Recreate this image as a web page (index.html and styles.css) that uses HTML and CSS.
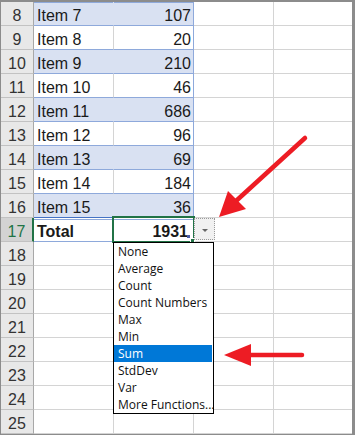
FILE: index.html
```html
<!DOCTYPE html>
<html lang="en">
<head>
    <meta charset="UTF-8">
    <title>Table Total Row - Sum</title>
    <link rel="stylesheet" href="styles.css">
</head>
<body>
    <div class="sheet">
        <div class="row band first"><div class="hd">8</div><div class="c a">Item 7</div><div class="c b">107</div><div class="c"></div><div class="c d"></div></div>
        <div class="row"><div class="hd">9</div><div class="c a">Item 8</div><div class="c b">20</div><div class="c"></div><div class="c d"></div></div>
        <div class="row band"><div class="hd">10</div><div class="c a">Item 9</div><div class="c b">210</div><div class="c"></div><div class="c d"></div></div>
        <div class="row"><div class="hd">11</div><div class="c a">Item 10</div><div class="c b">46</div><div class="c"></div><div class="c d"></div></div>
        <div class="row band"><div class="hd">12</div><div class="c a">Item 11</div><div class="c b">686</div><div class="c"></div><div class="c d"></div></div>
        <div class="row"><div class="hd">13</div><div class="c a">Item 12</div><div class="c b">96</div><div class="c"></div><div class="c d"></div></div>
        <div class="row band"><div class="hd">14</div><div class="c a">Item 13</div><div class="c b">69</div><div class="c"></div><div class="c d"></div></div>
        <div class="row"><div class="hd">15</div><div class="c a">Item 14</div><div class="c b">184</div><div class="c"></div><div class="c d"></div></div>
        <div class="row band last-item"><div class="hd">16</div><div class="c a">Item 15</div><div class="c b">36</div><div class="c"></div><div class="c d"></div></div>
        <div class="row total"><div class="hd active">17</div><div class="c a">Total</div><div class="c b">1931</div><div class="c"></div><div class="c d"></div></div>
        <div class="row"><div class="hd">18</div><div class="c"></div><div class="c"></div><div class="c"></div><div class="c d"></div></div>
        <div class="row"><div class="hd">19</div><div class="c"></div><div class="c"></div><div class="c"></div><div class="c d"></div></div>
        <div class="row"><div class="hd">20</div><div class="c"></div><div class="c"></div><div class="c"></div><div class="c d"></div></div>
        <div class="row"><div class="hd">21</div><div class="c"></div><div class="c"></div><div class="c"></div><div class="c d"></div></div>
        <div class="row"><div class="hd">22</div><div class="c"></div><div class="c"></div><div class="c"></div><div class="c d"></div></div>
        <div class="row"><div class="hd">23</div><div class="c"></div><div class="c"></div><div class="c"></div><div class="c d"></div></div>
        <div class="row"><div class="hd">24</div><div class="c"></div><div class="c"></div><div class="c"></div><div class="c d"></div></div>
        <div class="row"><div class="hd">25</div><div class="c"></div><div class="c"></div><div class="c"></div><div class="c d"></div></div>
    </div>

    <!-- selected cell B17 -->
    <div class="selection"></div>
    <div class="fill-mark"></div>
    <div class="fill-handle"></div>

    <div class="dropdown-btn"><span class="caret"></span></div>

    <ul class="func-list">
        <li>None</li>
        <li>Average</li>
        <li>Count</li>
        <li>Count Numbers</li>
        <li>Max</li>
        <li>Min</li>
        <li class="selected">Sum</li>
        <li>StdDev</li>
        <li>Var</li>
        <li>More Functions...</li>
    </ul>

    <svg class="arrows" width="355" height="435" viewBox="0 0 355 435">
        <line x1="305" y1="138" x2="236" y2="201" stroke="#ed1c24" stroke-width="4.5" stroke-linecap="round"/>
        <polygon points="219,217 228,191 246,209" fill="#ed1c24"/>
        <line x1="302" y1="355" x2="245" y2="355" stroke="#ed1c24" stroke-width="4.5" stroke-linecap="round"/>
        <polygon points="224,355 251,344 251,366" fill="#ed1c24"/>
    </svg>
</body>
</html>
```

FILE: styles.css
```css
body {
    margin: 0;
    position: relative;
    width: 355px;
    height: 435px;
    overflow: hidden;
    font-family: 'Liberation Sans', Arial, sans-serif;
    color: #1a1a1a;
}

.sheet {
    width: 355px;
    height: 435px;
    box-sizing: border-box;
    border-style: solid;
    border-color: #8c8c8c;
    border-width: 2px 3px 1px 1px;
    background-color: #fff;
}

.row {
    display: grid;
    grid-template-columns: 33px 80px 80px 80px 78px;
    height: 24px;
}

.hd,
.c {
    box-sizing: border-box;
    height: 24px;
    border-bottom: 1px solid #d4d4d4;
    border-right: 1px solid #d4d4d4;
    font-size: 16px;
    line-height: 16px;
    display: flex;
    align-items: flex-end;
    padding-bottom: 1px;
    white-space: nowrap;
    overflow: hidden;
}

.hd {
    background-color: #e8e8e8;
    border-bottom-color: #c2c2c2;
    border-right-color: #a8a8a8;
    justify-content: center;
    color: #333;
}

.hd.active {
    background-color: #d3d3d3;
    color: #217346;
    border-right: 2px solid #217346;
}

.c.d {
    border-right: none;
}

/* table columns */
.c.a {
    padding-left: 3px;
    border-bottom-color: #8ea9db;
}

.c.b {
    justify-content: flex-end;
    padding-right: 2px;
    border-bottom-color: #8ea9db;
    border-right-color: #8ea9db;
}

.band .c.a,
.band .c.b {
    background-color: #d9e1f2;
}

.band .c.a {
    border-right-color: #d9e1f2;
}

.first .c.a,
.first .c.b {
    box-shadow: inset 0 1px 0 #8ea9db;
}

.last-item .c.a,
.last-item .c.b {
    border-bottom-color: #4472c4;
}

.total .c.a,
.total .c.b {
    font-weight: bold;
    box-shadow: inset 0 1px 0 #fff, inset 0 2px 0 #8ea9db;
}

.total .c.b {
    padding-right: 5px;
}

.selection {
    position: absolute;
    left: 112px;
    top: 216px;
    width: 83px;
    height: 27px;
    box-sizing: border-box;
    border: 2px solid #217346;
}

.fill-handle {
    position: absolute;
    left: 190px;
    top: 238px;
    width: 3px;
    height: 3px;
    background-color: #217346;
    border: 1px solid #fff;
}

.fill-mark {
    position: absolute;
    left: 187px;
    top: 235px;
    width: 3px;
    height: 3px;
    background-color: #4b5ea8;
}

.dropdown-btn {
    position: absolute;
    left: 194px;
    top: 218px;
    width: 21px;
    height: 22px;
    box-sizing: border-box;
    background-color: #f1f1f1;
    border: 1px dotted #9a9a9a;
    display: flex;
    justify-content: center;
    align-items: center;
}

.caret {
    width: 0;
    height: 0;
    border-left: 3px solid transparent;
    border-right: 3px solid transparent;
    border-top: 3px solid #666;
    margin-top: 2px;
}

.func-list {
    position: absolute;
    left: 113px;
    top: 242px;
    width: 101px;
    box-sizing: border-box;
    margin: 0;
    padding: 0;
    list-style: none;
    background-color: #fff;
    border: 1px solid #000;
    font-family: 'Open Sans', 'Noto Sans', sans-serif;
    font-size: 12px;
}

.func-list li {
    height: 17px;
    line-height: 17px;
    padding-left: 4px;
    white-space: nowrap;
    overflow: hidden;
    color: #111;
}

.func-list li.selected {
    background-color: #0078d7;
    color: #fff;
    margin-right: 1px;
}

.arrows {
    position: absolute;
    left: 0;
    top: 0;
}
```
